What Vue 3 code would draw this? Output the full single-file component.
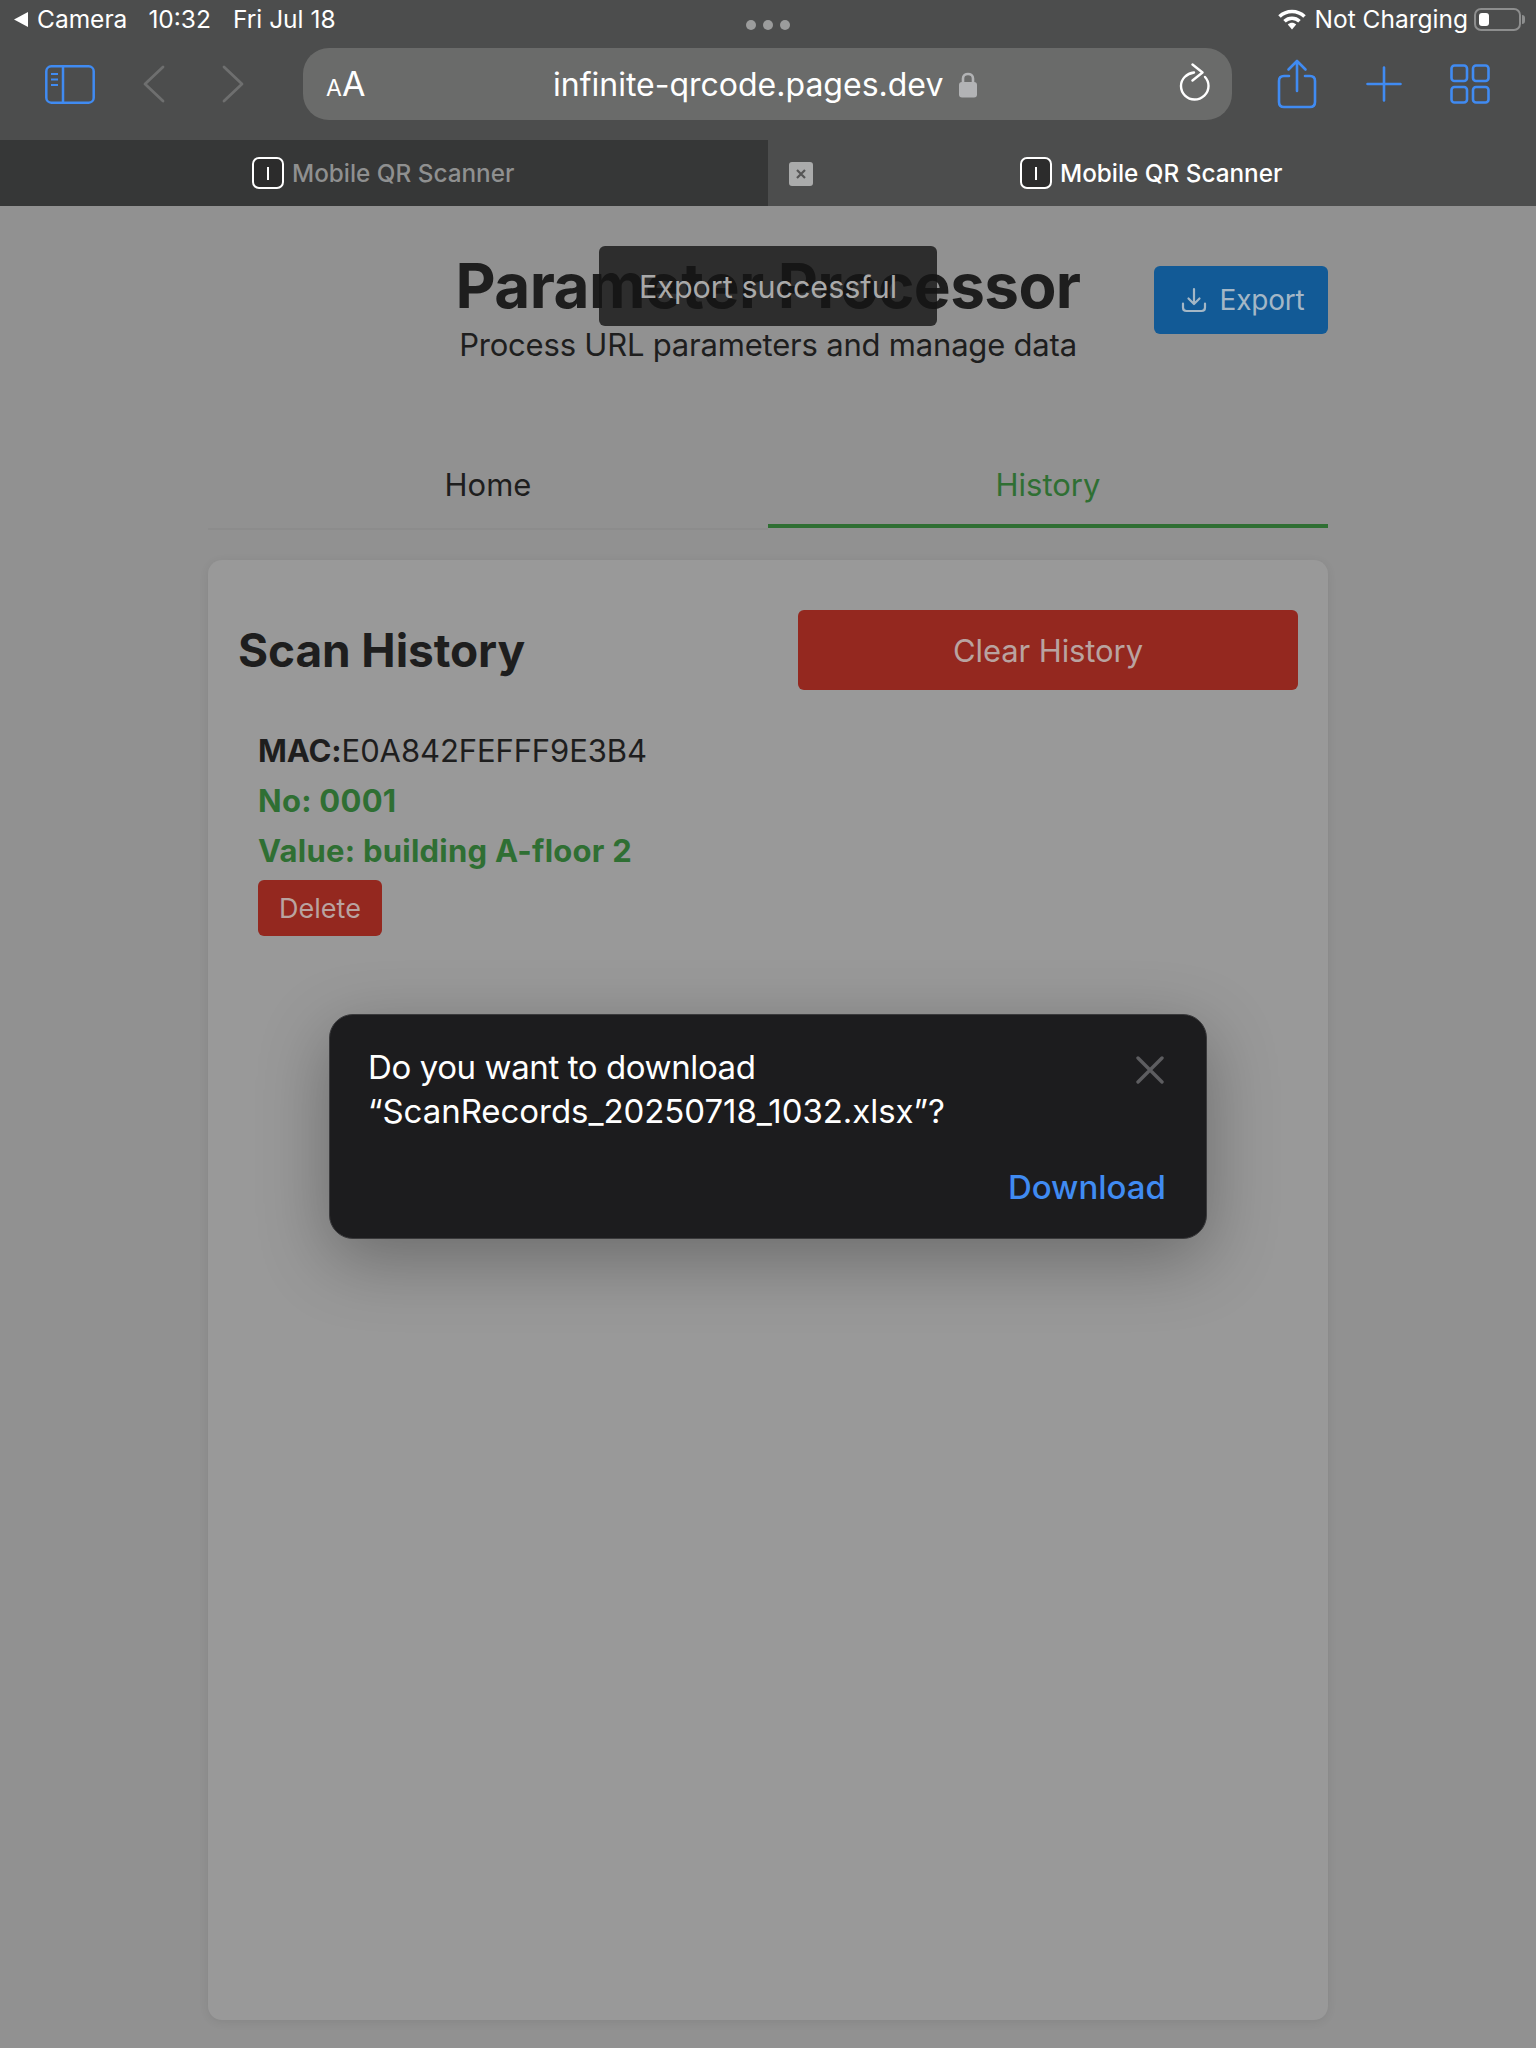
<script setup>
const tabs = [
  { id: 'left', title: 'Mobile QR Scanner', active: false },
  { id: 'right', title: 'Mobile QR Scanner', active: true },
]
</script>

<template>
  <div class="screen">
    <header class="chrome">
      <div class="status">
        <div class="status-side">
          <svg class="back-tri" width="16" height="17" viewBox="0 0 16 17"><path d="M15 1V16L1 8.500Z" fill="#fff" /></svg>
          <span class="status-camera">Camera</span>
          <span class="status-time">10:32</span>
          <span class="status-date">Fri Jul 18</span>
        </div>
        <div class="dots"><i></i><i></i><i></i></div>
        <div class="status-side status-right">
          <svg width="28" height="21" viewBox="0 0 28 21" fill="none">
            <path d="M1.500 7.500C8.500 .8 19.500 .8 26.500 7.500" stroke="#fff" stroke-width="3.600" />
            <path d="M6.500 12.300C10.800 8.300 17.200 8.300 21.500 12.300" stroke="#fff" stroke-width="3.600" />
            <path d="M9.800 15.500C12.300 13.300 15.700 13.300 18.200 15.500L14 20.500Z" fill="#fff" />
          </svg>
          <span class="charging">Not Charging</span>
          <div class="battery"><span class="battery-level"></span></div>
          <span class="battery-nub"></span>
        </div>
      </div>

      <div class="toolbar">
        <div class="nav-icons">
          <svg width="50" height="39" viewBox="0 0 50 39" fill="none" stroke="#408bf2" stroke-width="2.500">
            <rect x="1.300" y="1.300" width="47.400" height="36.400" rx="5" />
            <path d="M18 1.300V37.700" />
            <path d="M6 9H13M6 14.500H13M6 20H13" stroke-width="2" />
          </svg>
          <svg class="chevron-back" width="22" height="38" viewBox="0 0 22 38" fill="none" stroke="#6e6f6f" stroke-width="2.800" stroke-linecap="round" stroke-linejoin="round">
            <path d="M20 2L2 19L20 36" />
          </svg>
          <svg class="chevron-forward" width="22" height="38" viewBox="0 0 22 38" fill="none" stroke="#6e6f6f" stroke-width="2.800" stroke-linecap="round" stroke-linejoin="round">
            <path d="M2 2L20 19L2 36" />
          </svg>
        </div>

        <div class="url-bar">
          <span class="reader"><small>A</small>A</span>
          <div class="url">
            <span>infinite-qrcode.pages.dev</span>
            <svg width="20" height="27" viewBox="0 0 20 27" fill="none">
              <path d="M5 12V7.500C5 1.500 15 1.500 15 7.500V12" stroke="#b2b3b5" stroke-width="2.600" />
              <rect x="1" y="11" width="18" height="15.500" rx="3" fill="#b2b3b5" />
            </svg>
          </div>
          <svg class="reload" width="32" height="38" viewBox="0 0 32 38" fill="none" stroke="#fff" stroke-width="2.400" stroke-linecap="round" stroke-linejoin="round">
            <path d="M15 9.500C7.500 10.500 2 16 2 23C2 30.500 8.200 36.500 15.500 36.500C23 36.500 29.500 30.500 29.500 23C29.500 19.500 28.300 16.500 26 14" />
            <path d="M13.500 1.500L23.500 9.500L13.500 17.500" />
          </svg>
        </div>

        <div class="action-icons">
          <svg width="40" height="50" viewBox="0 0 40 50" fill="none" stroke="#408bf2" stroke-width="2.600" stroke-linecap="round" stroke-linejoin="round">
            <path d="M12 17H7C3.800 17 2 18.800 2 22V43C2 46.200 3.800 48 7 48H33C36.200 48 38 46.200 38 43V22C38 18.800 36.200 17 33 17H28" />
            <path d="M20 32V2M11.500 10.500L20 2L28.500 10.500" />
          </svg>
          <svg width="36" height="36" viewBox="0 0 36 36" stroke="#408bf2" stroke-width="2.600" stroke-linecap="round">
            <path d="M18 1.500V34.500M1.500 18H34.500" />
          </svg>
          <svg width="40" height="40" viewBox="0 0 40 40" fill="none" stroke="#408bf2" stroke-width="2.600">
            <rect x="1.500" y="1.500" width="15.500" height="15.500" rx="3" />
            <rect x="23" y="1.500" width="15.500" height="15.500" rx="3" />
            <rect x="1.500" y="23" width="15.500" height="15.500" rx="3" />
            <rect x="23" y="23" width="15.500" height="15.500" rx="3" />
          </svg>
        </div>
      </div>

      <div class="tab-bar">
        <div v-for="tab in tabs" :key="tab.id" class="browser-tab" :class="{ current: tab.active }">
          <span v-if="tab.active" class="tab-close">
            <svg width="12" height="12" viewBox="0 0 12 12" stroke="#555" stroke-width="2.200"><path d="M2 2L10 10M10 2L2 10" /></svg>
          </span>
          <span class="favicon"><b></b></span>
          <span class="tab-title">{{ tab.title }}</span>
        </div>
      </div>
    </header>

    <main class="page">
      <section class="hero">
        <span></span>
        <div class="hero-text">
          <h1>Parameter Processor</h1>
          <p>Process URL parameters and manage data</p>
        </div>
        <button class="export">
          <svg width="26" height="26" viewBox="0 0 26 26" fill="none" stroke="#a4b7c6" stroke-width="2.200" stroke-linecap="round" stroke-linejoin="round">
            <path d="M13 2V16.500M7.500 11.500L13 17L18.500 11.500" />
            <path d="M2 16.500V20.500C2 22.800 3.200 24 5.500 24H20.500C22.800 24 24 22.800 24 20.500V16.500" />
          </svg>
          Export
        </button>
      </section>

      <nav class="page-tabs">
        <div class="page-tab">Home</div>
        <div class="page-tab selected">History</div>
      </nav>

      <section class="card">
        <div class="card-head">
          <h2>Scan History</h2>
          <button class="clear">Clear History</button>
        </div>
        <div class="record">
          <div class="record-line"><strong>MAC:</strong>E0A842FEFFF9E3B4</div>
          <div class="record-line green">No: 0001</div>
          <div class="record-line green">Value: building A-floor 2</div>
          <button class="delete">Delete</button>
        </div>
      </section>
    </main>

    <div class="toast">Export successful</div>

    <div class="dialog">
      <div class="dialog-top">
        <p><span class="dialog-question">Do you want to download</span><br />“ScanRecords_20250718_1032.xlsx”?</p>
        <svg width="28" height="28" viewBox="0 0 28 28" stroke="#5d5d60" stroke-width="3.400" stroke-linecap="round"><path d="M2 2L26 26M26 2L2 26" /></svg>
      </div>
      <div class="dialog-action">Download</div>
    </div>
  </div>
</template>

<style>
html, body { margin: 0; background: #919191; }
</style>

<style scoped>
* { box-sizing: border-box; }
.screen {
  position: relative;
  width: 1536px;
  height: 2048px;
  display: flex;
  flex-direction: column;
  overflow: hidden;
  background: #919191;
  font-family: Inter, "Liberation Sans", sans-serif;
  color: #1e1e1e;
}
.chrome { height: 206px; flex: none; background: #4c4d4d; color: #fff; }
.status {
  height: 38px;
  margin-bottom: 2px;
  padding: 0 11px 0 13px;
  display: flex;
  align-items: center;
  justify-content: space-between;
  font-size: 24.500px;
  position: relative;
}
.status-side { display: flex; align-items: center; }
.back-tri { margin-right: 8px; }
.status-time { margin-left: 21px; }
.status-date { margin-left: 22px; }
.status-right { gap: 0; }
.charging { margin-left: 9px; }
.dots { position: absolute; left: 746px; top: 20px; display: flex; gap: 7px; }
.dots i { width: 10px; height: 10px; border-radius: 50%; background: #9b9c9c; }
.battery {
  width: 47px;
  height: 23px;
  margin-left: 6px;
  padding: 3px;
  border: 2px solid #8d8e8e;
  border-radius: 7px;
}
.battery-level { display: block; width: 10px; height: 13px; background: #fff; border-radius: 3px; }
.battery-nub { width: 3px; height: 9px; margin-left: 1px; background: #8d8e8e; border-radius: 0 3px 3px 0; }
.toolbar {
  height: 100px;
  padding: 8px 46px 0 45px;
  display: flex;
  align-items: flex-start;
}
.nav-icons { width: 258px; height: 72px; display: flex; align-items: center; flex: none; }
.chevron-back { margin-left: 48px; }
.chevron-forward { margin-left: 57px; }
.url-bar {
  width: 929px;
  height: 72px;
  flex: none;
  position: relative;
  display: flex;
  align-items: center;
  justify-content: space-between;
  padding: 0 21px 0 23px;
  background: #6a6b6a;
  border-radius: 26px;
}
.reader { font-size: 34px; line-height: 1; width: 40px; }
.reader small { font-size: 23px; }
.url {
  position: absolute;
  left: 250px;
  top: 0;
  height: 72px;
  display: flex;
  align-items: center;
  gap: 15px;
  font-size: 32px;
}
.reload { margin-top: -4px; }
.action-icons {
  margin-left: 45px;
  flex: 1;
  height: 72px;
  display: flex;
  align-items: center;
  justify-content: space-between;
}
.tab-bar { height: 66px; display: flex; }
.browser-tab {
  position: relative;
  flex: 1;
  display: flex;
  align-items: center;
  justify-content: flex-start;
  padding-left: 252px;
  background: #363737;
  color: #8f9090;
  font-size: 24.300px;
  font-weight: 500;
}
.browser-tab.current { background: #4c4d4d; color: #fff; }
.tab-close {
  position: absolute;
  left: 21px;
  top: 22px;
  width: 24px;
  height: 24px;
  background: #aaabab;
  border-radius: 3px;
  display: flex;
  align-items: center;
  justify-content: center;
}
.favicon {
  width: 32px;
  height: 32px;
  margin-right: 8px;
  border: 2px solid #fff;
  border-radius: 7px;
  background: #2c2c2c;
  display: flex;
  align-items: center;
  justify-content: center;
}
.favicon b { width: 2px; height: 13px; background: #fff; }

.page {
  flex: 1;
  padding: 0 208px 28px;
  display: flex;
  flex-direction: column;
}
.hero {
  height: 234px;
  display: grid;
  grid-template-columns: 1fr auto 1fr;
  align-items: start;
}
.hero-text { padding-top: 45px; text-align: center; }
.hero h1 { margin: 0; font-size: 62px; line-height: 70px; font-weight: 700; letter-spacing: -0.6px; }
.hero p { margin: 4px 0 0; font-size: 31px; line-height: 40px; letter-spacing: -0.2px; }
.export {
  justify-self: end;
  margin-top: 60px;
  width: 174px;
  height: 68px;
  padding-left: 9px;
  display: flex;
  align-items: center;
  justify-content: center;
  gap: 13px;
  border: 0;
  border-radius: 6px;
  background: #125a96;
  color: #a4b7c6;
  font: 400 28px Inter, sans-serif;
  letter-spacing: -0.2px;
}
.page-tabs { display: flex; height: 90px; }
.page-tab {
  flex: 1;
  height: 90px;
  text-align: center;
  font-size: 31px;
  line-height: 90px;
  border-bottom: 2px solid #8c8c8c;
}
.page-tab.selected { color: #2f6f33; height: 88px; border-bottom: 4px solid #2f6f33; }
.card {
  flex: 1;
  margin-top: 30px;
  padding: 50px 30px 0;
  background: #999;
  border-radius: 14px;
  box-shadow: 0 2px 10px rgba(0, 0, 0, .08);
}
.card-head { display: flex; align-items: center; justify-content: space-between; }
.card-head h2 { margin: 0; font-size: 46px; line-height: 80px; font-weight: 700; letter-spacing: -0.1px; }
.clear {
  width: 500px;
  height: 80px;
  border: 0;
  border-radius: 6px;
  background: #94281f;
  color: #b9a3a0;
  font: 400 31px Inter, sans-serif;
  letter-spacing: -0.1px;
}
.record { margin-top: 36px; padding-left: 20px; }
.record-line { font-size: 31px; line-height: 50px; letter-spacing: -0.1px; }
.record-line strong { font-weight: 700; }
.green { color: #2f6f33; font-weight: 700; letter-spacing: 0.25px; }
.delete {
  display: block;
  width: 124px;
  height: 56px;
  margin-top: 4px;
  border: 0;
  border-radius: 6px;
  background: #94281f;
  color: #b9a3a0;
  font: 400 27px Inter, sans-serif;
}
.toast {
  position: absolute;
  left: 599px;
  top: 246px;
  width: 338px;
  height: 80px;
  display: flex;
  align-items: center;
  justify-content: center;
  background: rgba(20, 20, 20, .8);
  border-radius: 6px;
  color: #a9a9a9;
  font-size: 30.500px;
}
.dialog {
  position: absolute;
  left: 329px;
  top: 1014px;
  width: 878px;
  height: 225px;
  padding: 30px 40px 0 38px;
  background: #1c1c1e;
  border: 1px solid #3a3a3c;
  border-radius: 24px;
  color: #fff;
  box-shadow: 0 20px 70px rgba(0, 0, 0, .3);
}
.dialog-top { display: flex; justify-content: space-between; align-items: flex-start; }
.dialog-top p { margin: 0; font-size: 33px; line-height: 44px; letter-spacing: -0.05px; }
.dialog-question { letter-spacing: -0.4px; }
.dialog-top svg { margin: 11px 2px 0 0; }
.dialog-action {
  margin-top: 32px;
  text-align: right;
  color: #408bf2;
  font-size: 33px;
  line-height: 44px;
  font-weight: 500;
}
</style>
